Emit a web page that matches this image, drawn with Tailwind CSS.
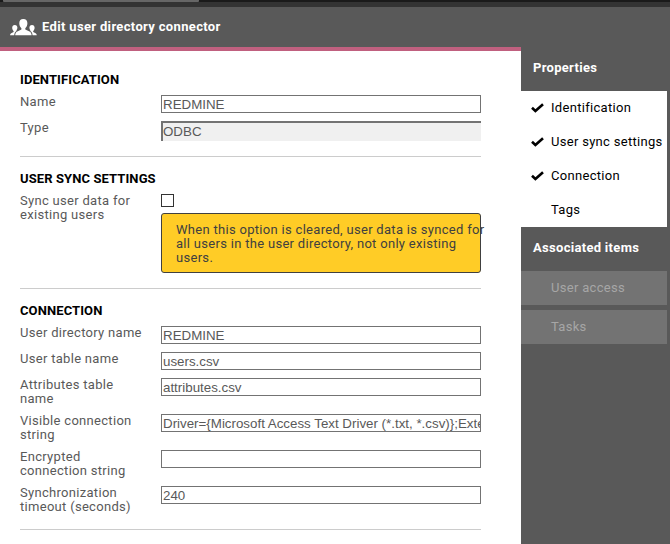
<!DOCTYPE html>
<html lang="en">
<head>
<meta charset="utf-8">
<title>Edit user directory connector</title>
<script src="https://cdn.jsdelivr.net/npm/@tailwindcss/browser@4"></script>
</head>
<body class="w-[670px] h-[544px] overflow-hidden bg-[#595959] font-['Roboto','Liberation_Sans',sans-serif] text-[13px] leading-[14px] flex flex-col">
<div class="h-[7px] shrink-0 bg-[#333]"><div class="h-[2px] bg-[#1a1a1a] pl-[3px]"><div class="h-[2px] w-[196px] bg-[#666] rounded-b-[1px]"></div></div></div>
<header class="h-10 shrink-0 flex items-center pl-[10px] text-white">
  <svg class="w-[27px] h-[17px]" viewBox="0 0 27 17" fill="#fff"><path d="M13.3 0C10.700 0 9.300 1.600 9.300 4.200c0 2 .9 4 2.100 5v1.400L7.300 12.600C6 13.300 5.300 14.500 5.200 16.300h16.400c-.1-1.800-.8-3-2.100-3.700l-4.200-2V9.200c1.200-1 2.100-3 2.100-5C17.400 1.600 15.900 0 13.300 0z"/><path d="M4.800 6C3.100 6 2.200 7.100 2.200 8.800c0 1.300.6 2.600 1.400 3.200v1.100L1.200 14.200C.5 14.600.1 15.300 0 16.300h4.200c.2-2.200 1-3.600 2.700-4.500l-.7-.3c.8-.7 1.200-1.600 1.200-2.700C7.400 7.100 6.500 6 4.800 6zM22 6c1.700 0 2.600 1.100 2.600 2.800 0 1.300-.6 2.600-1.400 3.200v1.100l2.400 1.100c.7.4 1.100 1.100 1.200 2.100h-4.200c-.2-2.200-1-3.600-2.700-4.500l.7-.3c-.8-.7-1.200-1.600-1.200-2.700C19.400 7.100 20.300 6 22 6z"/></svg>
  <h1 class="ml-[5px] text-[13px] font-bold tracking-[0.34px]">Edit user directory connector</h1>
</header>
<div class="flex flex-1 min-h-0">
<main class="w-[521px] shrink-0 bg-white border-t-4 border-[#c0607f] px-5 text-[#595959]">
  <section class="h-[106px] w-[461px] pt-[22px] border-b border-[#ccc]">
    <h2 class="h-[22px] text-black font-bold tracking-[0.1px]">IDENTIFICATION</h2>
    <div class="flex h-[26px]"><label class="w-[141px] shrink-0 tracking-[0.3px]">Name</label><div class="h-[18px] w-[320px] border border-[#737373] pl-px font-['Liberation_Sans',sans-serif] text-[13.33px] leading-[17px]">REDMINE</div></div>
    <div class="flex h-[26px]"><label class="w-[141px] shrink-0 tracking-[0.3px]">Type</label><div class="h-5 w-[320px] border-t-2 border-l-2 border-[#737373] bg-[#f0f0f0] font-['Liberation_Sans',sans-serif] text-[13.33px] leading-[17px]">ODBC</div></div>
  </section>
  <section class="h-[132px] w-[461px] pt-[15px] border-b border-[#ccc]">
    <h2 class="h-[22px] text-black font-bold tracking-[0.1px]">USER SYNC SETTINGS</h2>
    <div class="flex"><label class="w-[141px] shrink-0 tracking-[0.3px]">Sync user data for<br>existing users</label>
      <div class="w-[320px]"><div class="size-[13px] border border-[#333]"></div>
      <div class="mt-[6px] h-[60px] rounded-[3px] border border-[#404040] bg-[#ffcc26] pl-[14px] pt-[9px] text-[#404040] tracking-[0.3px] whitespace-nowrap">When this option is cleared, user data is synced for<br>all users in the user directory, not only existing<br>users.</div></div>
    </div>
  </section>
  <section class="h-[241px] w-[461px] pt-[15px] border-b border-[#ccc]">
    <h2 class="h-[22px] text-black font-bold tracking-[0.1px]">CONNECTION</h2>
    <div class="flex h-[26px]"><label class="w-[141px] shrink-0 tracking-[0.3px]">User directory name</label><div class="h-[18px] w-[320px] border border-[#737373] pl-px font-['Liberation_Sans',sans-serif] text-[13.33px] leading-[17px]">REDMINE</div></div>
    <div class="flex h-[26px]"><label class="w-[141px] shrink-0 tracking-[0.3px]">User table name</label><div class="h-[18px] w-[320px] border border-[#737373] pl-px font-['Liberation_Sans',sans-serif] text-[13.33px] leading-[17px]">users.csv</div></div>
    <div class="flex h-9"><label class="w-[141px] shrink-0 tracking-[0.3px]">Attributes table<br>name</label><div class="h-[18px] w-[320px] border border-[#737373] pl-px font-['Liberation_Sans',sans-serif] text-[13.33px] leading-[17px]">attributes.csv</div></div>
    <div class="flex h-9"><label class="w-[141px] shrink-0 tracking-[0.3px]">Visible connection<br>string</label><div class="h-[18px] w-[320px] border border-[#737373] pl-px font-['Liberation_Sans',sans-serif] text-[13.33px] leading-[17px] overflow-hidden whitespace-nowrap">Driver={Microsoft Access Text Driver (*.txt, *.csv)};Exten</div></div>
    <div class="flex h-9"><label class="w-[141px] shrink-0 tracking-[0.3px]">Encrypted<br>connection string</label><div class="h-[18px] w-[320px] border border-[#737373]"></div></div>
    <div class="flex h-9"><label class="w-[141px] shrink-0 tracking-[0.3px]">Synchronization<br>timeout (seconds)</label><div class="h-[18px] w-[320px] border border-[#737373] pl-px font-['Liberation_Sans',sans-serif] text-[13.33px] leading-[17px]">240</div></div>
  </section>
</main>
<aside class="w-[146px] shrink-0">
  <h2 class="h-11 pl-3 pt-[14px] text-white font-bold tracking-[0.3px]">Properties</h2>
  <nav class="bg-white text-black tracking-[0.3px]">
    <div class="h-[34px] flex items-center pl-[10px] gap-[7px]"><svg class="w-[13px] h-[10px]" viewBox="0 0 13 10"><path d="M1 4.800L4.400 8L12 1.200" fill="none" stroke="#000" stroke-width="2.600"/></svg>Identification</div>
    <div class="h-[34px] flex items-center pl-[10px] gap-[7px]"><svg class="w-[13px] h-[10px]" viewBox="0 0 13 10"><path d="M1 4.800L4.400 8L12 1.200" fill="none" stroke="#000" stroke-width="2.600"/></svg>User sync settings</div>
    <div class="h-[34px] flex items-center pl-[10px] gap-[7px]"><svg class="w-[13px] h-[10px]" viewBox="0 0 13 10"><path d="M1 4.800L4.400 8L12 1.200" fill="none" stroke="#000" stroke-width="2.600"/></svg>Connection</div>
    <div class="h-[34px] flex items-center pl-[30px]">Tags</div>
  </nav>
  <h2 class="h-11 pl-3 pt-[14px] text-white font-bold tracking-[0.3px]">Associated items</h2>
  <div class="flex flex-col gap-[5px] text-[#a6a6a6] tracking-[0.3px]">
    <div class="h-[34px] flex items-center pl-[30px] bg-[#737373]">User access</div>
    <div class="h-[34px] flex items-center pl-[30px] bg-[#737373]">Tasks</div>
  </div>
</aside>
</div>
</body>
</html>
